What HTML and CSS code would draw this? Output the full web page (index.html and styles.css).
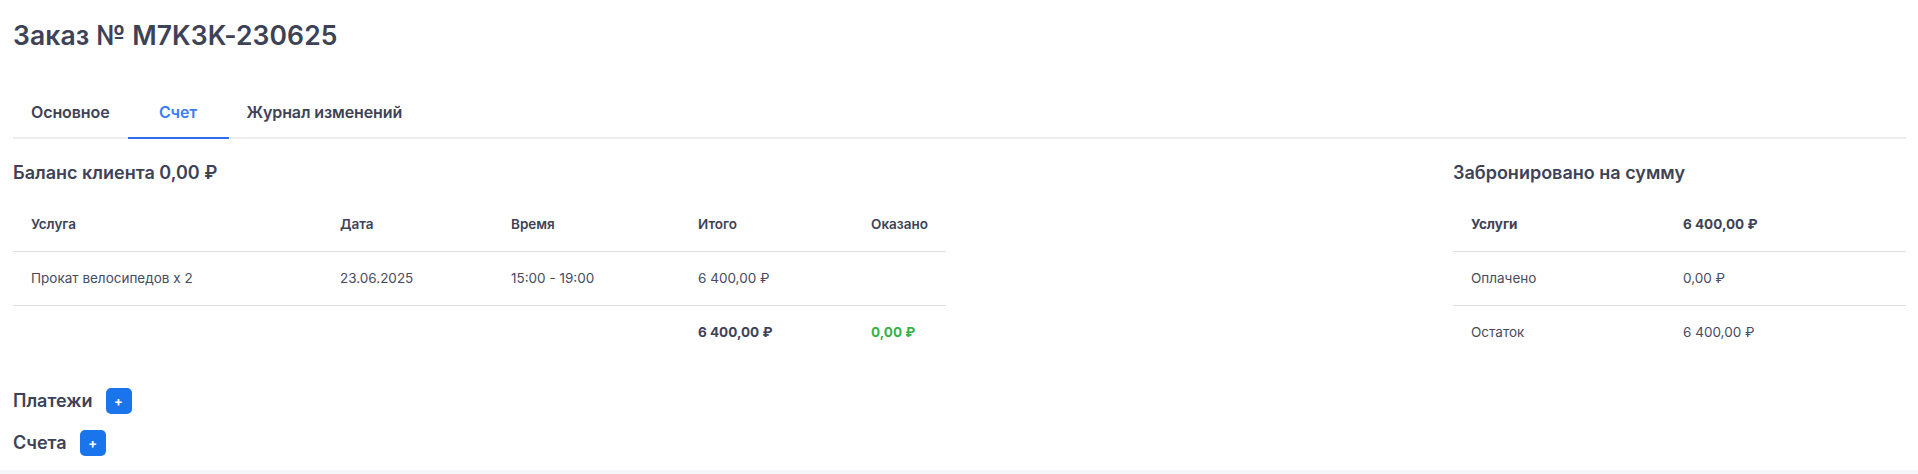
FILE: index.html
```html
<!DOCTYPE HTML>
<html lang="ru">
<head>
<meta http-equiv="Content-Type" content="text/html; charset=utf-8">
<title>Заказ № M7K3K-230625</title>
<link rel="stylesheet" href="styles.css">
</head>

<body>
<div class="page">
	<h1 class="title">Заказ № M7K3K-230625</h1>

	<nav class="tabs">
		<a class="tab">Основное</a>
		<a class="tab active">Счет</a>
		<a class="tab">Журнал изменений</a>
	</nav>

	<div class="summary">
		<section class="invoice">
			<h2 class="heading">Баланс клиента 0,00 ₽</h2>
			<table class="grid">
				<colgroup>
					<col class="c-service">
					<col class="c-date">
					<col class="c-time">
					<col class="c-total">
					<col class="c-done">
				</colgroup>
				<thead>
					<tr>
						<th>Услуга</th>
						<th>Дата</th>
						<th>Время</th>
						<th>Итого</th>
						<th>Оказано</th>
					</tr>
				</thead>
				<tbody>
					<tr>
						<td>Прокат велосипедов x 2</td>
						<td>23.06.2025</td>
						<td>15:00 - 19:00</td>
						<td>6 400,00 ₽</td>
						<td></td>
					</tr>
					<tr class="totals">
						<td></td>
						<td></td>
						<td></td>
						<td class="strong">6 400,00 ₽</td>
						<td class="green">0,00 ₽</td>
					</tr>
				</tbody>
			</table>
		</section>

		<section class="booked">
			<h2 class="heading">Забронировано на сумму</h2>
			<table class="grid">
				<colgroup>
					<col class="c-label">
					<col class="c-value">
				</colgroup>
				<tbody>
					<tr class="strong">
						<td>Услуги</td>
						<td>6 400,00 ₽</td>
					</tr>
					<tr>
						<td>Оплачено</td>
						<td>0,00 ₽</td>
					</tr>
					<tr class="totals">
						<td>Остаток</td>
						<td>6 400,00 ₽</td>
					</tr>
				</tbody>
			</table>
		</section>
	</div>

	<div class="block-row first">
		<h2 class="heading">Платежи</h2>
		<button class="add" type="button">+</button>
	</div>
	<div class="block-row">
		<h2 class="heading">Счета</h2>
		<button class="add" type="button">+</button>
	</div>
</div>
</body>
</html>
```

FILE: styles.css
```css
*{
	margin: 0;
	padding: 0;
	box-sizing: border-box;
}

body{
	background-color: #f5f6fa;
	font-family: Inter, "Noto Sans", sans-serif;
	color: #3e4256;
}

.page{
	background-color: #fff;
	padding: 19px 12px 14px 13px;
}

.title{
	font-size: 26.5px;
	line-height: 32px;
	font-weight: 600;
	letter-spacing: 0.1px;
}

/* вкладки */
.tabs{
	display: flex;
	margin-top: 39px;
	border-bottom: 2px solid #ececee;
}
.tab{
	min-width: 101px;
	padding: 12px 18px 15px;
	font-size: 16px;
	line-height: 20px;
	font-weight: 600;
	letter-spacing: -0.1px;
	text-align: center;
	cursor: pointer;
}
.tab.active{
	color: #3b7cf6;
	border-bottom: 2px solid #2f6fee;
	margin-bottom: -2px;
}

.heading{
	font-size: 18px;
	line-height: 24px;
	font-weight: 600;
}

.summary{
	display: flex;
	justify-content: space-between;
	margin-top: 22px;
}
.invoice{
	width: 933px;
}
.booked{
	width: 453px;
}

.grid{
	width: 100%;
	margin-top: 13px;
	border-collapse: collapse;
	table-layout: fixed;
	font-size: 13.5px;
	line-height: 17px;
}
.grid th,
.grid td{
	padding: 18px;
	text-align: left;
	white-space: nowrap;
}
.grid th{
	font-weight: 600;
}
.grid tr{
	border-bottom: 1px solid #dedfe3;
}
.grid tr.totals{
	border-bottom: none;
}
.grid td{
	color: #464b5f;
}
.grid .strong,
.grid .strong td{
	font-weight: 700;
	color: #3e4256;
}
.grid .green{
	font-weight: 700;
	color: #34b349;
}

.c-service{ width: 309px; }
.c-date{ width: 171px; }
.c-time{ width: 187px; }
.c-total{ width: 173px; }
.c-done{ width: 93px; }
.c-label{ width: 212px; }
.c-value{ width: 241px; }

/* платежи и счета */
.block-row{
	display: flex;
	align-items: center;
	gap: 13px;
	margin-top: 16px;
}
.block-row.first{
	margin-top: 29px;
}
.add{
	width: 26px;
	height: 26px;
	border: none;
	border-radius: 5px;
	background-color: #1a74ec;
	color: #fff;
	font-family: Inter, sans-serif;
	font-size: 13px;
	font-weight: 700;
	line-height: 26px;
	cursor: pointer;
}
```
